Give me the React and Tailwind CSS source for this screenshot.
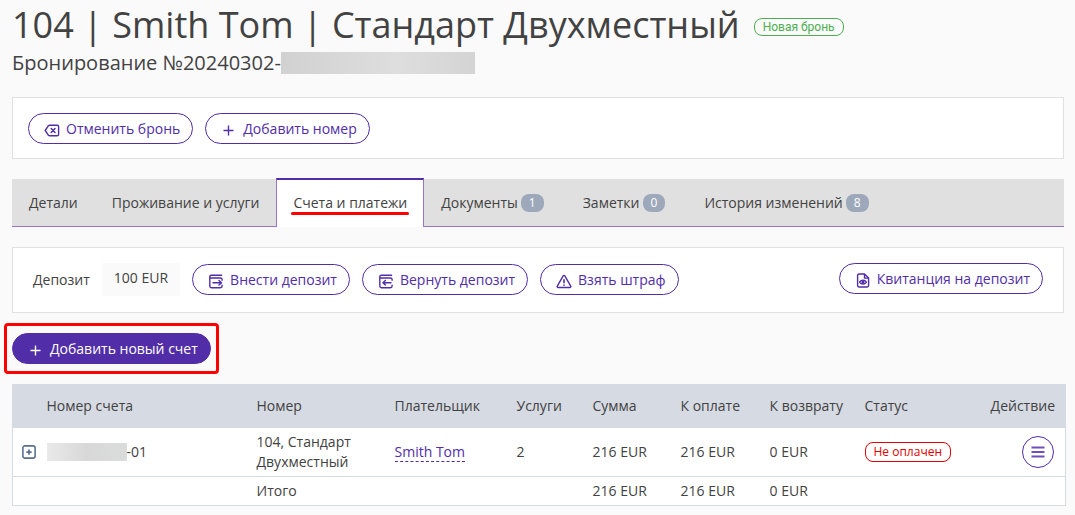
import React from "react";

function Icon({ children, className = "size-4" }) {
  return (
    <svg
      viewBox="0 0 16 16"
      className={`${className} shrink-0`}
      fill="none"
      stroke="currentColor"
      strokeWidth="1.4"
      strokeLinecap="round"
      strokeLinejoin="round"
      aria-hidden="true"
    >
      {children}
    </svg>
  );
}

const CancelIcon = () => (
  <Icon>
    <path d="M5.6 2.2h7.6c.8 0 1.4.6 1.4 1.4v7.8c0 .8-.6 1.4-1.4 1.4H5.6c-.4 0-.8-.2-1.1-.5L1.2 7.500l3.300-4.800c.3-.3.7-.5 1.100-.5z" />
    <path d="M7.200 5.500l3.800 4M11 5.500l-3.800 4" strokeWidth="1.500" />
  </Icon>
);
const PlusIcon = () => (
  <Icon>
    <path d="M7.500 2.500v10M2.500 7.500h10" strokeWidth="1.400" strokeLinecap="butt" />
  </Icon>
);
const DepositIcon = () => (
  <Icon>
    <path d="M13.6 1.2H3.4C2.4 1.2 1.8 1.800 1.800 2.700v9.400c0 .9.6 1.600 1.600 1.600h9c1 0 1.700-.6 1.700-1.600v-.8M2 4h10.400c1 0 1.700.6 1.700 1.500v.8" />
    <path d="M5 8.800h8.400M11 6.500l2.500 2.300L11 11.100" />
  </Icon>
);
const RefundIcon = () => (
  <Icon>
    <path d="M13.6 1.2H3.4C2.4 1.2 1.8 1.800 1.800 2.700v9.400c0 .9.6 1.600 1.600 1.600h9c1 0 1.700-.6 1.700-1.600v-.8M2 4h10.400c1 0 1.700.6 1.700 1.500v.8" />
    <path d="M13 8.800H5M7.400 6.500L4.900 8.800l2.500 2.300" />
  </Icon>
);
const PenaltyIcon = () => (
  <Icon>
    <path d="M7.3 1.7L1.3 12.100c-.4.6 0 1.400.8 1.400h11.800c.8 0 1.200-.8.8-1.400L8.700 1.700c-.3-.5-1.100-.5-1.400 0z" />
    <path d="M8 5.700v3M8 11v.2" strokeWidth="1.600" />
  </Icon>
);
const ReceiptIcon = () => (
  <Icon>
    <path d="M9.500 1H4C3.100 1 2.600 1.600 2.600 2.400v10.200c0 .8.5 1.400 1.400 1.400h8.200c.9 0 1.400-.6 1.400-1.400V5.100L9.500 1v4.100h4" />
    <path d="M4.600 9.100C6.200 6.500 9.800 6.500 11.400 9.100 9.800 11.700 6.200 11.700 4.600 9.100z" />
    <circle cx="8" cy="9.100" r=".9" fill="currentColor" />
  </Icon>
);

function PillButton({ icon, children, solid = false }) {
  return (
    <button
      type="button"
      className={`flex h-[31px] items-center gap-1.5 rounded-full border border-[#512da8] pr-3 pl-[15px] text-sm whitespace-nowrap ${
        solid ? "bg-[#512da8] text-white" : "bg-white text-[#512da8]"
      }`}
    >
      <span className="pt-1">{icon}</span>
      <span>{children}</span>
    </button>
  );
}

const tabs = [
  { label: "Детали" },
  { label: "Проживание и услуги" },
  { label: "Счета и платежи", active: true },
  { label: "Документы", count: 1 },
  { label: "Заметки", count: 0 },
  { label: "История изменений", count: 8 },
];

function Tabs() {
  return (
    <nav className="-mt-px flex items-end" role="tablist">
      {tabs.map((tab) => (
        <button
          key={tab.label}
          type="button"
          role="tab"
          aria-selected={Boolean(tab.active)}
          className={
            tab.active
              ? "flex h-[49px] items-center border-x border-t-2 border-x-[#9575cd] border-t-[#512da8] bg-white px-4 pb-0.5 text-sm whitespace-nowrap"
              : "flex h-12 items-center gap-[3px] border-b border-[#9575cd] bg-[#e0e0e0] px-[17px] text-sm whitespace-nowrap"
          }
        >
          {tab.active ? (
            <span className="relative">
              {tab.label}
              <span className="absolute -inset-x-0.5 -bottom-0.5 h-[3px] rounded-full bg-[#ff0000]" />
            </span>
          ) : (
            tab.label
          )}
          {tab.count !== undefined && (
            <span className="mr-[5px] h-[18px] rounded-lg bg-[#9da8bb] px-2 text-xs leading-[18px] text-white">
              {tab.count}
            </span>
          )}
        </button>
      ))}
      <div className="h-12 flex-1 border-b border-[#9575cd] bg-[#e0e0e0]" />
    </nav>
  );
}

function Invoices() {
  return (
    <table className="w-full table-fixed border-collapse border border-[#d6dae2] bg-white text-left text-sm leading-5">
      <colgroup>
        <col className="w-[25px]" />
        <col className="w-[210px]" />
        <col className="w-[138px]" />
        <col className="w-[122px]" />
        <col className="w-[76px]" />
        <col className="w-[88px]" />
        <col className="w-[89px]" />
        <col className="w-[95px]" />
        <col className="w-[110px]" />
        <col className="w-[100px]" />
      </colgroup>
      <thead className="bg-[#d6dae2]">
        <tr className="h-[43px] [&>th]:pr-2.5 [&>th]:pl-[9px] [&>th]:font-normal">
          <th aria-label="Развернуть" />
          <th>Номер счета</th>
          <th>Номер</th>
          <th>Плательщик</th>
          <th>Услуги</th>
          <th>Сумма</th>
          <th>К оплате</th>
          <th>К возврату</th>
          <th>Статус</th>
          <th className="text-right">Действие</th>
        </tr>
      </thead>
      <tbody>
        <tr className="h-[49px] border-b border-[#d6dae2] [&>td]:pr-[11px] [&>td]:pl-[9px]">
          <td>
            <button type="button" aria-label="Развернуть счет" className="block text-[#5b6f91]">
              <Icon className="size-3.5">
                <rect x="1" y="1" width="14" height="14" rx="2.500" strokeWidth="1.800" />
                <path d="M8 5v6M5 8h6" strokeWidth="2" strokeLinecap="butt" />
              </Icon>
            </button>
          </td>
          <td>
            <span className="flex items-center">
              <span className="h-[18px] w-20 bg-linear-to-r from-[#e8e9e8] via-[#d8d8d8] to-[#dadcdb]" />
              -01
            </span>
          </td>
          <td>104, Стандарт Двухместный</td>
          <td>
            <a href="#payer" className="border-b border-dashed border-[#512da8] text-[#512da8]">
              Smith Tom
            </a>
          </td>
          <td>2</td>
          <td>216 EUR</td>
          <td>216 EUR</td>
          <td>0 EUR</td>
          <td>
            <span className="flex h-5 w-fit items-center rounded-lg border border-[#e60000] px-2 text-xs whitespace-nowrap text-[#e60000]">
              Не оплачен
            </span>
          </td>
          <td>
            <button
              type="button"
              aria-label="Действия"
              className="ml-auto flex size-8 items-center justify-center rounded-full border border-[#512da8] text-[#6f4fbc]"
            >
              <Icon>
                <path d="M1.500 3.500h13M1.500 8h13M1.500 12.500h13" strokeWidth="2" strokeLinecap="butt" />
              </Icon>
            </button>
          </td>
        </tr>
        <tr className="h-[29px] [&>td]:px-[9px]">
          <td />
          <td />
          <td>Итого</td>
          <td />
          <td />
          <td>216 EUR</td>
          <td>216 EUR</td>
          <td>0 EUR</td>
          <td />
          <td />
        </tr>
      </tbody>
    </table>
  );
}

export default function App() {
  return (
    <main className="min-h-screen bg-[#fafafa] pr-[11px] pb-2 pl-3 font-['Open_Sans','Noto_Sans',sans-serif] text-sm text-[#424242]">
      <header className="pb-[22px]">
        <div className="flex items-center gap-3.5">
          <h1 className="text-4xl leading-[50px] whitespace-nowrap">
            104 | Smith Tom | Стандарт Двухместный
          </h1>
          <span className="mt-1 flex h-[18px] items-center rounded-lg border border-[#4caf50] px-2 font-[Roboto,sans-serif] text-xs whitespace-nowrap text-[#4caf50]">
            Новая бронь
          </span>
        </div>
        <h2 className="flex items-center text-xl leading-[25px]">
          Бронирование №20240302-
          <span className="h-[22px] w-[194px] bg-linear-to-r from-[#d1d1d1] via-[#dedede] via-60% to-[#d4d4d4]" />
        </h2>
      </header>

      <div className="flex flex-col gap-5">
        <section className="flex items-center gap-3 border border-[#e0e0e0] bg-white px-[15px] pt-[15px] pb-3.5">
          <PillButton icon={<CancelIcon />}>Отменить бронь</PillButton>
          <PillButton icon={<PlusIcon />}>Добавить номер</PillButton>
        </section>

        <Tabs />

        <section className="flex items-start gap-3 border border-[#e0e0e0] bg-white px-5 pt-[15px] pb-4">
          <div className="flex items-center gap-3">
            <span>Депозит</span>
            <span className="bg-[#fafafa] px-3 pt-[5px] pb-2">100 EUR</span>
            <PillButton icon={<DepositIcon />}>Внести депозит</PillButton>
            <PillButton icon={<RefundIcon />}>Вернуть депозит</PillButton>
            <PillButton icon={<PenaltyIcon />}>Взять штраф</PillButton>
          </div>
          <div className="ml-auto">
            <PillButton icon={<ReceiptIcon />}>Квитанция на депозит</PillButton>
          </div>
        </section>

        <div className="relative w-fit">
          <PillButton solid icon={<PlusIcon />}>
            Добавить новый счет
          </PillButton>
          <span className="pointer-events-none absolute -inset-x-2 -inset-y-2.5 rounded border-3 border-[#ff0000]" />
        </div>

        <Invoices />
      </div>
    </main>
  );
}
